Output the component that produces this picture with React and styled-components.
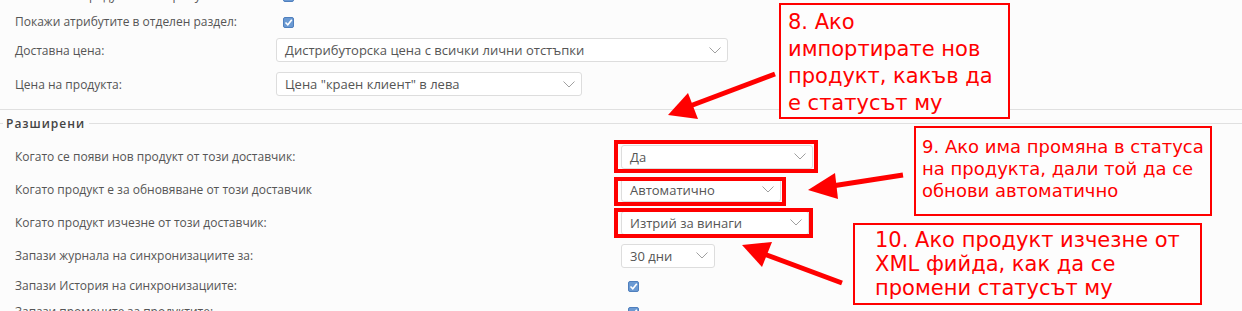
import React from "react";
import styled, { createGlobalStyle } from "styled-components";

const Global = createGlobalStyle`
  html, body { margin: 0; padding: 0; background: #fcfcfc; }
  * { box-sizing: border-box; }
`;

const Page = styled.div`
  position: relative;
  width: 1242px;
  height: 311px;
  overflow: hidden;
  background: #fcfcfc;
  font-family: "Open Sans", "Noto Sans", sans-serif;
`;

const Scroller = styled.div`
  margin-top: -19px;
`;

const Row = styled.div`
  display: grid;
  grid-template-columns: ${(p) => p.$label}px 1fr;
  align-items: center;
  height: ${(p) => p.$h}px;
  padding-left: 15px;
`;

const Label = styled.span`
  font-size: 12px;
  color: #555;
  white-space: nowrap;
`;

const SelectBox = styled.div`
  width: ${(p) => p.$w}px;
  height: 24px;
  border: 1px solid #dddddd;
  border-radius: 3px;
  background: #fff;
  display: flex;
  align-items: center;
  justify-content: space-between;
  padding: 0 6px 0 8px;
  font-size: 13px;
  color: #555;
  white-space: nowrap;
`;

const Check = styled.span`
  display: inline-flex;
  align-items: center;
  justify-content: center;
  width: 11px;
  height: 11px;
  margin-left: 7px;
  border-radius: 2px;
  background: #6b9ad3;
  border: 1px solid #4f7fbd;
`;

const Separator = styled.div`
  margin-top: 8px;
  height: 1px;
  background: #e0e0e0;
`;

const Legend = styled.div`
  display: flex;
  align-items: center;
  height: 14px;
  margin-top: 6px;
  margin-bottom: 10px;
  &::before {
    content: "";
    width: 3px;
    height: 1px;
    background: #e0e0e0;
  }
  &::after {
    content: "";
    flex: 1;
    height: 1px;
    background: #e0e0e0;
  }
`;

const LegendText = styled.span`
  padding: 0 4px 0 3px;
  font-size: 12px;
  font-weight: 600;
  letter-spacing: 1px;
  color: #444;
`;

const Highlight = styled.div`
  position: absolute;
  left: ${(p) => p.$x}px;
  top: ${(p) => p.$y}px;
  width: ${(p) => p.$w}px;
  height: ${(p) => p.$h}px;
  border: 4px solid #ff0000;
  pointer-events: none;
`;

const Callout = styled.div`
  position: absolute;
  left: ${(p) => p.$x}px;
  top: ${(p) => p.$y}px;
  width: ${(p) => p.$w}px;
  height: ${(p) => p.$h}px;
  border: 2px solid #ff0000;
  background: #fdfdfd;
  color: #ff0000;
  font-family: "DejaVu Sans", Verdana, sans-serif;
  font-size: ${(p) => p.$size}px;
  line-height: ${(p) => p.$lh}px;
  padding: ${(p) => p.$pad};
  white-space: nowrap;
`;

const Arrows = styled.svg`
  position: absolute;
  left: 0;
  top: 0;
  pointer-events: none;
`;

const Chevron = () => (
  <svg width="12" height="7" viewBox="0 0 12 7">
    <polyline points="0.5,0.5 6,6 11.5,0.5" fill="none" stroke="#a0a0a0" strokeWidth="1" />
  </svg>
);

const Tick = () => (
  <svg width="9" height="9" viewBox="0 0 9 9">
    <polyline points="1.5,4.5 3.8,6.8 7.8,1.8" fill="none" stroke="#fff" strokeWidth="1.6" />
  </svg>
);

const Select = ({ w, children }) => (
  <SelectBox $w={w}>
    <span>{children}</span>
    <Chevron />
  </SelectBox>
);

const CheckBox = () => (
  <Check>
    <Tick />
  </Check>
);

const Arrow = ({ tail, neck, tip, a, b }) => (
  <g>
    <line x1={tail[0]} y1={tail[1]} x2={neck[0]} y2={neck[1]} stroke="#ff0000" strokeWidth="5" />
    <polygon points={`${tip[0]},${tip[1]} ${a[0]},${a[1]} ${b[0]},${b[1]}`} fill="#ff0000" />
  </g>
);

export default function App() {
  return (
    <>
      <Global />
      <Page>
        <Scroller>
          <Row $label={261} $h={28}>
            <Label>Използвай продуктите с атрибути:</Label>
            <div><CheckBox /></div>
          </Row>
          <Row $label={261} $h={24}>
            <Label>Покажи атрибутите в отделен раздел:</Label>
            <div><CheckBox /></div>
          </Row>
          <Row $label={261} $h={34}>
            <Label>Доставна цена:</Label>
            <Select w={452}>Дистрибуторска цена с всички лични отстъпки</Select>
          </Row>
          <Row $label={261} $h={34}>
            <Label>Цена на продукта:</Label>
            <Select w={306}>Цена "краен клиент" в лева</Select>
          </Row>
          <Separator />
          <Legend>
            <LegendText>Разширени</LegendText>
          </Legend>
          <Row $label={606} $h={33}>
            <Label>Когато се появи нов продукт от този доставчик:</Label>
            <Select w={192}>Да</Select>
          </Row>
          <Row $label={606} $h={33}>
            <Label>Когато продукт е за обновяване от този доставчик</Label>
            <Select w={160}>Автоматично</Select>
          </Row>
          <Row $label={606} $h={33}>
            <Label>Когато продукт изчезне от този доставчик:</Label>
            <Select w={188}>Изтрий за винаги</Select>
          </Row>
          <Row $label={606} $h={33}>
            <Label>Запази журнала на синхронизациите за:</Label>
            <Select w={94}>30 дни</Select>
          </Row>
          <Row $label={606} $h={26}>
            <Label>Запази История на синхронизациите:</Label>
            <div><CheckBox /></div>
          </Row>
          <Row $label={606} $h={26}>
            <Label>Запази промените за продуктите:</Label>
            <div><CheckBox /></div>
          </Row>
        </Scroller>

        <Highlight $x={614} $y={140} $w={204} $h={33} />
        <Highlight $x={614} $y={177} $w={172} $h={29} />
        <Highlight $x={614} $y={208} $w={199} $h={30} />

        <Arrows width="1242" height="311" viewBox="0 0 1242 311">
          <Arrow tail={[775, 74]} neck={[690, 106]} tip={[668, 115]} a={[688, 93]} b={[698, 119]} />
          <Arrow tail={[903, 175]} neck={[832, 186]} tip={[808, 190]} a={[835, 173]} b={[838, 199]} />
          <Arrow tail={[842, 283]} neck={[764, 254]} tip={[742, 245]} a={[772, 242]} b={[762, 267]} />
        </Arrows>

        <Callout $x={779} $y={3} $w={231} $h={116} $size={21} $lh={27} $pad="4px 0 0 7px">
          8. Ако
          <br />
          импортирате нов
          <br />
          продукт, какъв да
          <br />е статусът му
        </Callout>
        <Callout $x={914} $y={126} $w={298} $h={90} $size={18} $lh={22} $pad="8px 0 0 6px">
          9. Ако има промяна в статуса
          <br />
          на продукта, дали той да се
          <br />
          обнови автоматично
        </Callout>
        <Callout $x={853} $y={223} $w={349} $h={82} $size={21} $lh={24} $pad="3px 0 0 20px">
          10. Ако продукт изчезне от
          <br />
          XML фийда, как да се
          <br />
          промени статусът му
        </Callout>
      </Page>
    </>
  );
}
